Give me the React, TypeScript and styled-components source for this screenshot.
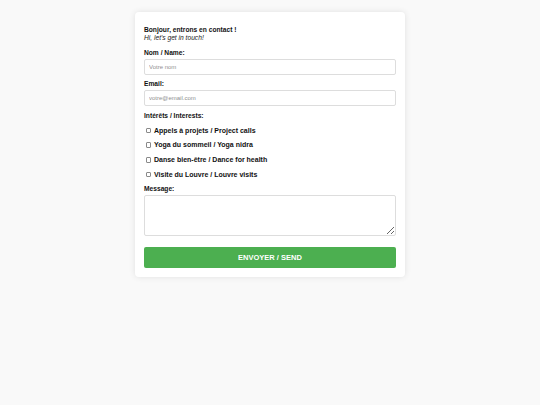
import React from "react";
import styled, { createGlobalStyle } from "styled-components";

const GlobalStyle = createGlobalStyle`
  html, body {
    margin: 0;
    padding: 0;
    background: #f9f9f9;
    font-family: "Liberation Sans", Arial, sans-serif;
  }
`;

const Page = styled.div`
  display: flex;
  justify-content: center;
  padding-top: 12px;
  min-height: 405px;
  box-sizing: border-box;
`;

const Card = styled.form`
  width: 270px;
  box-sizing: border-box;
  padding: 14px 9px 9px;
  background: #ffffff;
  border-radius: 4px;
  box-shadow: 0 0 6px rgba(0, 0, 0, 0.1);
  display: flex;
  flex-direction: column;
  align-self: flex-start;
`;

const Heading = styled.div`
  font-size: 6.67px;
  line-height: 8px;
  color: #111;
  margin-bottom: 6.5px;
`;

const HeadingMain = styled.div`
  font-weight: bold;
`;

const HeadingSub = styled.div`
  font-style: italic;
  color: #222;
`;

const Field = styled.div<{ $gap?: number }>`
  display: flex;
  flex-direction: column;
  margin-bottom: ${({ $gap }) => ($gap ?? 5.5)}px;
`;

const Label = styled.label<{ $spacing?: number }>`
  font-size: 6.67px;
  line-height: 8px;
  font-weight: bold;
  color: #111;
  margin-bottom: ${({ $spacing }) => ($spacing ?? 2)}px;
`;

const Input = styled.input`
  height: 16px;
  box-sizing: border-box;
  border: 1px solid #dddddd;
  border-radius: 2px;
  padding: 0 4px;
  font-family: inherit;
  font-size: 6px;
  outline: none;

  &::placeholder {
    color: #8f8f8f;
  }
`;

const TextArea = styled.textarea`
  height: 41px;
  box-sizing: border-box;
  border: 1px solid #dddddd;
  border-radius: 2px;
  padding: 4px;
  font-family: inherit;
  font-size: 6px;
  outline: none;
`;

const Options = styled.div`
  display: flex;
  flex-direction: column;
  gap: 6.7px;
  margin-top: 7px;
  margin-bottom: 6.5px;
`;

const Option = styled.label`
  display: flex;
  align-items: center;
  gap: 3px;
  font-size: 7px;
  line-height: 8px;
  font-weight: bold;
  color: #111;
  padding-left: 1.5px;
`;

const Check = styled.input`
  appearance: none;
  margin: 0;
  width: 5.5px;
  height: 5.5px;
  border: 0.7px solid #8a8a8a;
  border-radius: 1px;
  background: #fff;
  box-sizing: border-box;
`;

const SendButton = styled.button`
  margin-top: 10.7px;
  height: 21px;
  border: none;
  border-radius: 2px;
  background: #4caf50;
  color: #ffffff;
  font-family: inherit;
  font-weight: bold;
  font-size: 7.5px;
  cursor: pointer;
`;

const interests = [
  "Appels à projets / Project calls",
  "Yoga du sommeil / Yoga nidra",
  "Danse bien-être / Dance for health",
  "Visite du Louvre / Louvre visits",
];

const App: React.FC = () => {
  return (
    <>
      <GlobalStyle />
      <Page>
        <Card onSubmit={(e) => e.preventDefault()}>
          <Heading>
            <HeadingMain>Bonjour, entrons en contact !</HeadingMain>
            <HeadingSub>Hi, let's get in touch!</HeadingSub>
          </Heading>

          <Field>
            <Label>Nom / Name:</Label>
            <Input type="text" placeholder="Votre nom" />
          </Field>

          <Field>
            <Label>Email:</Label>
            <Input type="email" placeholder="votre@email.com" />
          </Field>

          <Label $spacing={0}>Intérêts / Interests:</Label>
          <Options>
            {interests.map((item) => (
              <Option key={item}>
                <Check type="checkbox" />
                {item}
              </Option>
            ))}
          </Options>

          <Field $gap={0}>
            <Label>Message:</Label>
            <TextArea />
          </Field>

          <SendButton type="submit">ENVOYER / SEND</SendButton>
        </Card>
      </Page>
    </>
  );
};

export default App;
